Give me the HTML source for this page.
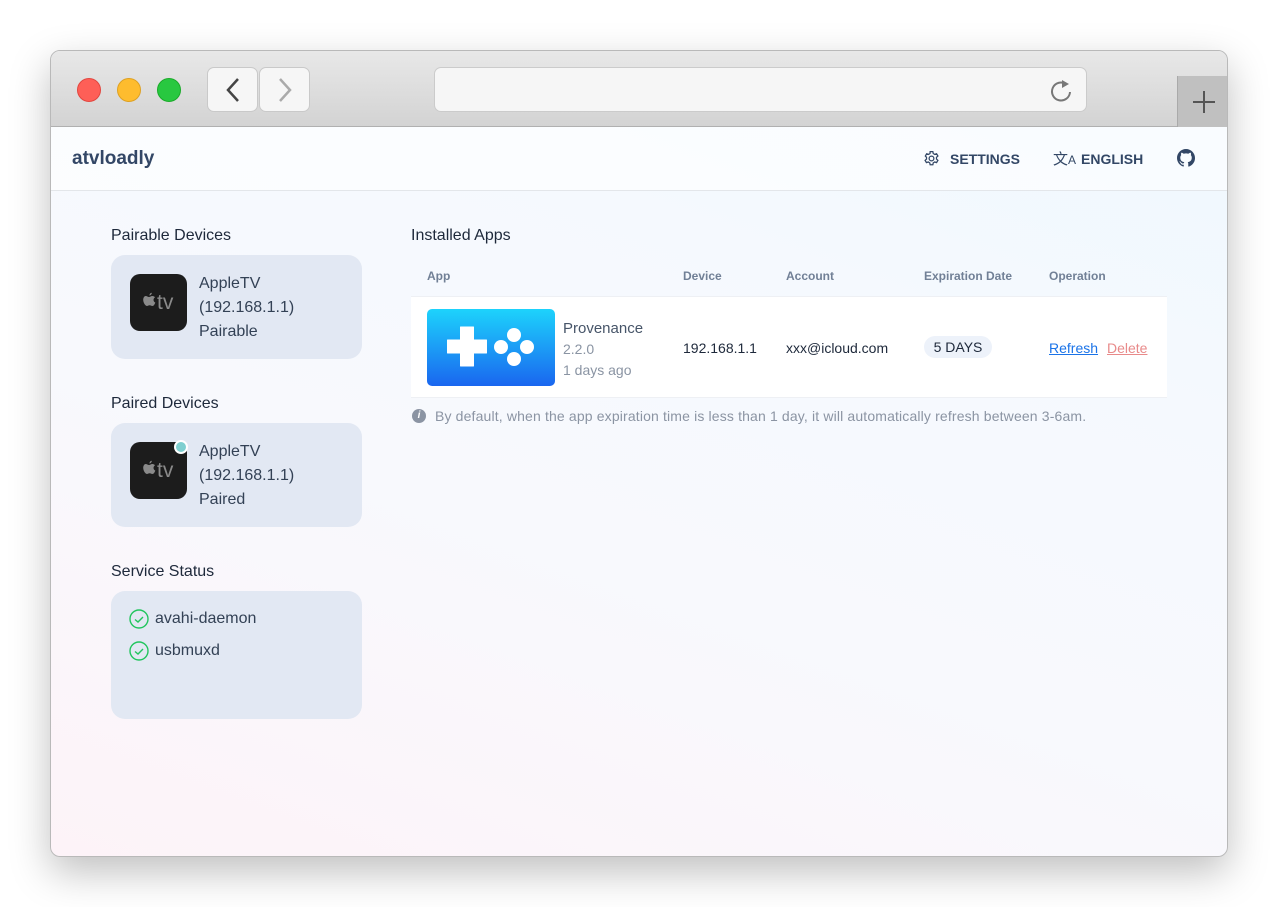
<!DOCTYPE html>
<html><head><style>
*{box-sizing:border-box;margin:0;padding:0}
body{width:1278px;height:907px;background:#fff;font-family:"Liberation Sans",sans-serif;position:relative;overflow:hidden;color:#334155}
.win{position:absolute;left:50px;top:50px;width:1178px;height:807px;border-radius:10px;overflow:hidden;border:1px solid #b9b9b9;box-shadow:0 15px 40px rgba(0,0,0,.25);background:linear-gradient(20deg,#fdf3f8 0%,#f8f9fd 40%,#f5f9fe 70%,#eef8fe 100%)}
.tb{position:absolute;left:0;top:0;width:100%;height:76px;background:linear-gradient(#e8e8e8,#d3d3d3);border-bottom:1px solid #b0b0b0}
.dot{position:absolute;top:27px;width:24px;height:24px;border-radius:50%}
.nav{position:absolute;top:16px;width:51px;height:45px;background:#f6f6f6;border-radius:7px;border:1px solid #c9c9c9}
.url{position:absolute;left:383px;top:16px;width:653px;height:45px;background:#f6f6f6;border-radius:7px;border:1px solid #cbcbcb}
.plus{position:absolute;left:1126px;top:25px;width:52px;height:51px;background:#c0c0c0;border-left:1px solid #aaa}
.hdr{position:absolute;left:0;top:76px;width:100%;height:64px;border-bottom:1px solid #e3e6ea;background:rgba(255,255,255,.6)}
.logo{position:absolute;left:21px;top:21px;font-size:19px;font-weight:bold;color:#334766}
.hi{position:absolute;top:24px;font-size:14px;font-weight:bold;color:#334766}
.st{position:absolute;font-size:16px;color:#1e293b}
.card{position:absolute;left:60px;width:251px;background:#e2e8f3;border-radius:14px}
.tv{position:absolute;left:19px;top:19px;width:57px;height:57px;background:#1c1c1c;border-radius:10px}
.ct{position:absolute;left:88px;top:17px;font-size:16px;line-height:24px;color:#334155}
.th{position:absolute;top:218px;font-size:12px;font-weight:bold;color:#718096}
.td{position:absolute;top:289px;font-size:14px;color:#1e293b}
</style></head><body>
<div class="win">
<div class="tb">
<div class="dot" style="left:26px;background:#fe5f57;border:1px solid #e2463f"></div>
<div class="dot" style="left:66px;background:#febc2e;border:1px solid #dea123"></div>
<div class="dot" style="left:106px;background:#28c840;border:1px solid #1aab29"></div>
<div class="nav" style="left:156px"><svg width="51" height="45"><path d="M30 11 L20 22 L30 33" stroke="#444" stroke-width="2.5" fill="none"/></svg></div>
<div class="nav" style="left:208px"><svg width="51" height="45"><path d="M20 11 L30 22 L20 33" stroke="#aaa" stroke-width="2.5" fill="none"/></svg></div>
<div class="url"><svg style="position:absolute;left:613px;top:10px" width="26" height="26"><path d="M18 6 A9 9 0 1 0 22 14" stroke="#777" stroke-width="2" fill="none"/><path d="M14 2 L21 6 L14 10Z" fill="#777"/></svg></div>
<div class="plus"><svg width="52" height="51"><path d="M26 15v22M15 26h22" stroke="#555" stroke-width="2"/></svg></div>
</div>
<div class="hdr">
<div class="logo">atvloadly</div>
<svg style="position:absolute;left:871px;top:22px" width="19" height="19" viewBox="0 0 24 24" fill="none" stroke="#334766" stroke-width="1.6"><circle cx="12" cy="12" r="3"/><path d="M10.3 3.3h3.4l.5 2.4 1.9 1.1 2.3-.8 1.7 2.9-1.8 1.6v2.2l1.8 1.6-1.7 2.9-2.3-.8-1.9 1.1-.5 2.4h-3.4l-.5-2.4-1.9-1.1-2.3.8-1.7-2.9 1.8-1.6v-2.2L4.2 8.9l1.7-2.9 2.3.8 1.9-1.1z"/></svg>
<div class="hi" style="left:899px">SETTINGS</div>
<div class="hi" style="left:1002px;font-weight:normal;font-size:15px;top:21px">文<span style="font-size:12px">A</span></div>
<div class="hi" style="left:1030px">ENGLISH</div>
<svg style="position:absolute;left:1126px;top:22px" width="18" height="18" viewBox="0 0 16 16"><path fill="#334766" d="M8 0C3.58 0 0 3.580 0 8c0 3.54 2.29 6.53 5.47 7.59.4.07.55-.17.55-.38v-1.33c-2.23.48-2.7-1.070-2.7-1.070-.36-.92-.89-1.170-.89-1.170-.73-.5.06-.49.06-.49.8.06 1.23.83 1.23.83.71 1.22 1.870.87 2.330.66.07-.52.28-.87.51-1.070-1.780-.2-3.640-.89-3.640-3.950 0-.87.31-1.590.82-2.150-.08-.2-.36-1.020.08-2.120 0 0 .67-.21 2.2.82.64-.18 1.320-.27 2-.27.68 0 1.360.09 2 .27 1.530-1.040 2.2-.82 2.2-.82.44 1.1.16 1.920.08 2.120.51.56.82 1.270.82 2.150 0 3.070-1.870 3.750-3.650 3.950.29.25.54.73.54 1.480v2.2c0 .21.15.46.55.38A8.013 8.013 0 0016 8c0-4.420-3.580-8-8-8z"/></svg>
</div>
<div class="st" style="left:60px;top:176px">Pairable Devices</div>
<div class="card" style="top:204px;height:104px"><div class="tv"><svg width="57" height="57"><path d="M15.5 22c1.5 0 2.3 1 3.5 1s1.9-1 3.4-1c1.1 0 2 .5 2.6 1.4-2.2 1.3-1.8 4.3.3 5.2-.5 1.4-1.6 3.4-2.9 3.4-1.1 0-1.5-.7-2.8-.7s-1.6.7-2.8.7c-1.4 0-3.6-3.200-3.600-6.200 0-2.300 1.400-3.800 2.300-3.800z M19.5 21.5c-.1-1.300 1-2.600 2.300-2.700.1 1.300-1 2.600-2.300 2.700z" fill="#8a8a8a"/><text x="27" y="35" font-family="Liberation Sans" font-size="21" fill="#8a8a8a">tv</text></svg></div><div class="ct">AppleTV<br>(192.168.1.1)<br>Pairable</div></div>
<div class="st" style="left:60px;top:344px">Paired Devices</div>
<div class="card" style="top:372px;height:104px"><div class="tv"><svg width="57" height="57"><path d="M15.5 22c1.5 0 2.3 1 3.5 1s1.9-1 3.4-1c1.1 0 2 .5 2.6 1.4-2.2 1.3-1.8 4.3.3 5.2-.5 1.4-1.6 3.4-2.9 3.4-1.1 0-1.5-.7-2.8-.7s-1.6.7-2.8.7c-1.4 0-3.6-3.200-3.600-6.200 0-2.300 1.400-3.800 2.300-3.800z M19.5 21.5c-.1-1.300 1-2.600 2.300-2.700.1 1.300-1 2.600-2.300 2.700z" fill="#8a8a8a"/><text x="27" y="35" font-family="Liberation Sans" font-size="21" fill="#8a8a8a">tv</text></svg></div><div style="position:absolute;left:63px;top:17px;width:14px;height:14px;border-radius:50%;background:#7fcfd0;border:2px solid #fff"></div><div class="ct">AppleTV<br>(192.168.1.1)<br>Paired</div></div>
<div class="st" style="left:60px;top:512px">Service Status</div>
<div class="card" style="top:540px;height:128px">
<svg style="position:absolute;left:18px;top:18px" width="20" height="20"><circle cx="10" cy="10" r="9" stroke="#22c55e" stroke-width="1.4" fill="none"/><path d="M6 10.5l3 2.5 5-5" stroke="#22c55e" stroke-width="1.4" fill="none"/></svg>
<div class="ct" style="left:44px;top:16px">avahi-daemon</div>
<svg style="position:absolute;left:18px;top:50px" width="20" height="20"><circle cx="10" cy="10" r="9" stroke="#22c55e" stroke-width="1.4" fill="none"/><path d="M6 10.5l3 2.5 5-5" stroke="#22c55e" stroke-width="1.4" fill="none"/></svg>
<div class="ct" style="left:44px;top:48px">usbmuxd</div>
</div>
<div class="st" style="left:360px;top:176px">Installed Apps</div>
<div class="th" style="left:376px">App</div>
<div class="th" style="left:632px">Device</div>
<div class="th" style="left:735px">Account</div>
<div class="th" style="left:873px">Expiration Date</div>
<div class="th" style="left:998px">Operation</div>
<div style="position:absolute;left:360px;top:245px;width:756px;height:102px;background:#fff;border-top:1px solid #eef0f4;border-bottom:1px solid #eef0f4"></div>
<div style="position:absolute;left:376px;top:258px;width:128px;height:77px;border-radius:5px;background:linear-gradient(#1dd3fc,#1a66ef)">
<svg width="128" height="77"><path d="M33.5 18h13v13h13v13h-13v13h-13V44h-13V31h13z" fill="#fff" stroke="#fff" stroke-width="1" stroke-linejoin="round"/><circle cx="87" cy="26" r="7" fill="#fff"/><circle cx="87" cy="50" r="7" fill="#fff"/><circle cx="74" cy="38" r="7" fill="#fff"/><circle cx="100" cy="38" r="7" fill="#fff"/></svg></div>
<div style="position:absolute;left:512px;top:267px;font-size:15px;color:#475569;line-height:21px">Provenance<br><span style="font-size:14px;color:#8a94a3">2.2.0<br>1 days ago</span></div>
<div class="td" style="left:632px">192.168.1.1</div>
<div class="td" style="left:735px">xxx@icloud.com</div>
<div style="position:absolute;left:873px;top:285px;width:68px;height:22px;border-radius:11px;background:#edf2fa;font-size:14px;text-align:center;line-height:22px;color:#1e293b">5 DAYS</div>
<div class="td" style="left:998px;color:#1a73e8;text-decoration:underline">Refresh</div>
<div class="td" style="left:1056px;color:#e88a8a;text-decoration:underline">Delete</div>
<div style="position:absolute;left:361px;top:358px;width:14px;height:14px;border-radius:50%;background:#8b94a3;color:#fff;font-size:10px;font-weight:bold;font-style:italic;text-align:center;line-height:14px">i</div>
<div style="position:absolute;left:384px;top:357px;font-size:14px;color:#8b94a3;letter-spacing:.15px">By default, when the app expiration time is less than 1 day, it will automatically refresh between 3-6am.</div>
</div>
</body></html>
